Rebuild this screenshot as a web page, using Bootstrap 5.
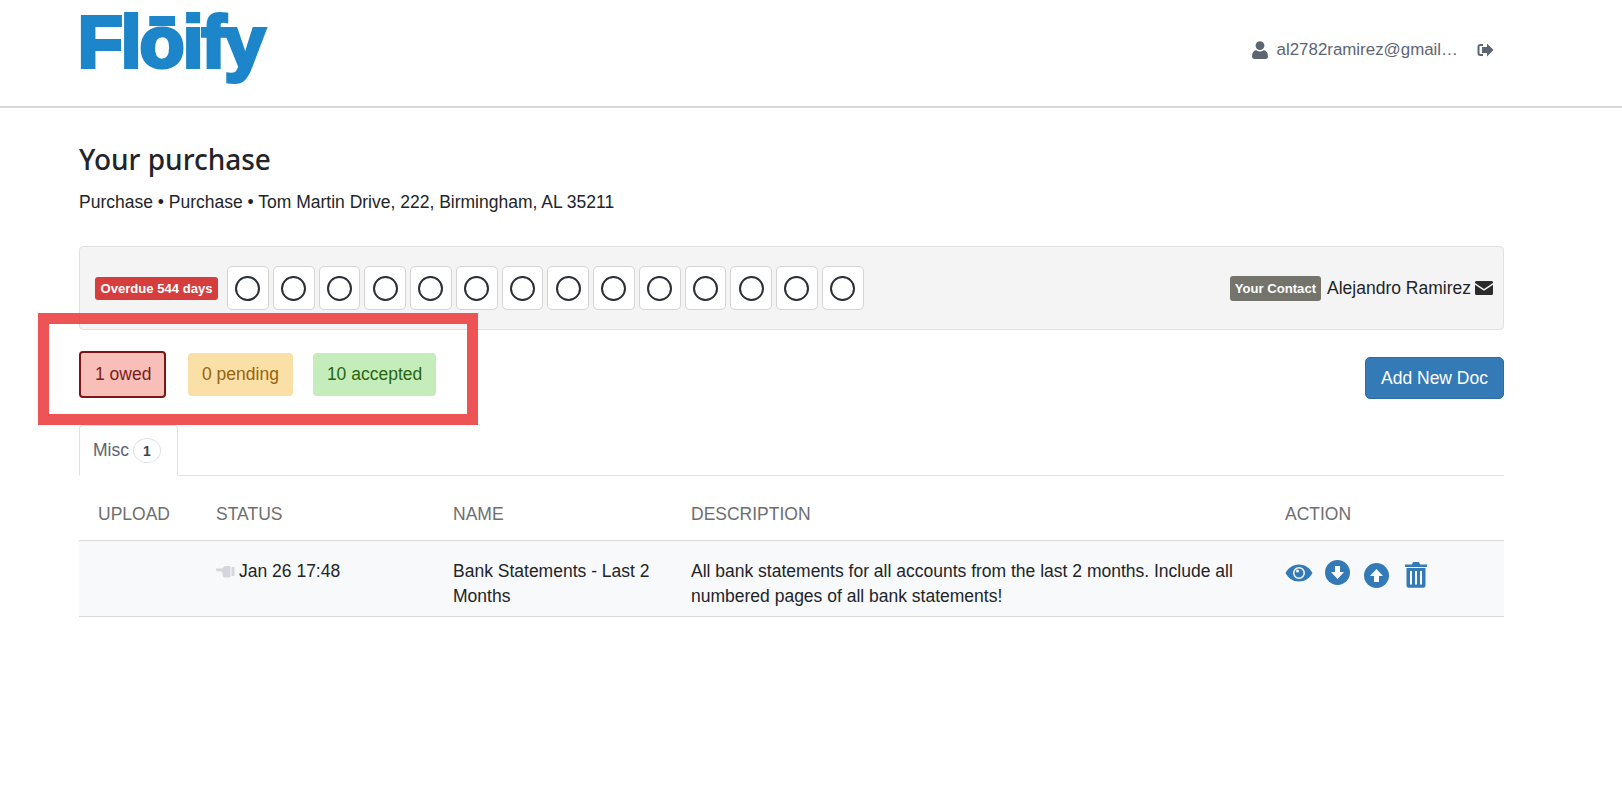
<!DOCTYPE html>
<html lang="en">
<head>
<meta charset="utf-8">
<title>Your purchase</title>
<link href="https://cdn.jsdelivr.net/npm/bootstrap@5.3.0/dist/css/bootstrap.min.css" rel="stylesheet">
<style>
body{font-family:"Liberation Sans",Arial,sans-serif;font-size:17.5px;color:#212529;background:#fff;height:811px;overflow:hidden;}
.wrap{padding:0 118px 0 79px;}
.top-bar{height:108px;border-bottom:2px solid #d9d9d9;}
.logo-text{font-family:"Liberation Sans",Arial,sans-serif;font-weight:700;font-size:73px;line-height:80px;letter-spacing:-1.5px;color:#1d85c9;-webkit-text-stroke:4px #1d85c9;paint-order:stroke fill;margin:2px 0 0 -1px;padding-right:8px;white-space:nowrap;}
.user-box{color:#5d6573;font-size:16.9px;margin-top:-7px;}
.user-mail{white-space:nowrap;margin-left:9px;}
.out-ico{margin:0 10px 0 19px;}
.page-title{font-family:"Noto Sans",sans-serif;font-weight:500;font-size:28px;line-height:34px;margin:34px 0 0;color:#212529;}
.sub-line{margin:14px 0 0;line-height:24px;}
.status-box{margin-top:32px;height:84px;background:#f4f4f4;border:1px solid #e1e1e1;border-radius:4px;padding:0 10px 0 15px;}
.late-tag{background:#d63e3e;color:#fff;font-weight:700;font-size:13.1px;line-height:23px;height:23px;padding:0 5px;border-radius:3px;width:123px;white-space:nowrap;text-align:center;}
.step-list{margin-left:9px;gap:4px;}
.step-box{width:41.75px;height:44px;background:#fff;border:1px solid #d5d5d5;border-radius:5px;}
.step-ring{width:25px;height:25px;border:2.3px solid #2b2f36;border-radius:50%;}
.who-tag{background:#74746c;color:#fff;font-weight:700;font-size:13.1px;line-height:25px;height:25px;padding:0 5px;border-radius:3px;}
.who-name{margin:0 4px 0 6px;}
.filter-row{margin-top:21px;height:47px;}
.chip{height:43px;line-height:43px;padding:0 14px;border-radius:4px;white-space:nowrap;}
.chip-owed{background:#f7bfb8;color:#7b1c1c;border:2px solid #7b1518;height:47px;line-height:43px;padding:0 14px;width:87px;}
.chip-pend{background:#fae0a6;color:#966310;margin-left:22px;}
.chip-acc{background:#c4edbb;color:#29650f;margin-left:20px;}
.add-doc{background:#337ab7;border:1px solid #2e6da4;color:#fff;border-radius:5px;width:139px;height:42px;padding:0;font-size:17.5px;margin-top:6px;}
.tab-strip{margin-top:27px;height:51px;border-bottom:1px solid #dee2e6;}
.misc-tab{width:99px;height:51px;background:#fff;border:1px solid #dee2e6;border-bottom-color:#fff;border-radius:4px 4px 0 0;padding:12px 0 0 13px;color:#5c6470;line-height:24px;}
.count-ring{width:28px;height:25px;border:1px solid #dee2e6;border-radius:50%;font-size:14px;font-weight:700;color:#3d4450;margin-left:4px;}
.doc-table{table-layout:fixed;width:100%;border-collapse:collapse;}
.doc-table th{font-weight:400;color:#6e6e6e;height:64px;padding:12px 19px 0;vertical-align:middle;border-bottom:1px solid #d9d9d9;}
.doc-table td{background:#f8f9fa;padding:18px 19px 7px;height:75px;vertical-align:top;line-height:25px;border-bottom:1px solid #d9d9d9;}
.c1{width:118px;}.c2{width:237px;}.c3{width:238px;}.c4{width:594px;}
.act-icons{gap:12px;margin-top:1px;}
.act-eye{margin-top:3px;}
.act-up{margin:3px 0 0 2px;}
.act-bin{margin-left:4px;margin-top:1px;}
.flag-ico{margin-right:4px;vertical-align:-1px;}
.frame-mark{position:absolute;left:38px;top:313px;width:440px;height:112px;border:11px solid rgba(236,64,66,.9);}
</style>
</head>
<body>
<header class="top-bar wrap d-flex justify-content-between">
  <div class="logo-text">Flōify</div>
  <div class="user-box d-flex align-items-center">
    <svg width="16" height="18" viewBox="0 0 16 18" fill="#5d6573"><circle cx="8" cy="4.6" r="4.4"/><path d="M0 15.5C0 11 2.5 9.2 4.5 9.2c1 .8 2.2 1.2 3.5 1.2s2.500-.4 3.500-1.200c2 0 4.500 1.800 4.500 6.300 0 1.500-1 2.500-2.400 2.500H2.400C1 18 0 17 0 15.500z"/></svg>
    <span class="user-mail">al2782ramirez@gmail…</span>
    <svg class="out-ico" width="17" height="14" viewBox="0 0 17 14" fill="#5d6573"><path d="M6 1H3.500C1.600 1 .5 2.200.5 4v6c0 1.800 1.100 3 3 3H6v-2H3.500c-.6 0-1-.4-1-1V4c0-.6.4-1 1-1H6z"/><path d="M10 .5 16.500 7 10 13.500V10H5V4h5z"/></svg>
  </div>
</header>
<main class="wrap">
  <h1 class="page-title">Your purchase</h1>
  <p class="sub-line">Purchase • Purchase • Tom Martin Drive, 222, Birmingham, AL 35211</p>
  <section class="status-box d-flex align-items-center justify-content-between">
    <div class="d-flex align-items-center">
      <span class="late-tag">Overdue 544 days</span>
      <div class="step-list d-flex">
        <div class="step-box d-flex align-items-center justify-content-center"><span class="step-ring"></span></div>
        <div class="step-box d-flex align-items-center justify-content-center"><span class="step-ring"></span></div>
        <div class="step-box d-flex align-items-center justify-content-center"><span class="step-ring"></span></div>
        <div class="step-box d-flex align-items-center justify-content-center"><span class="step-ring"></span></div>
        <div class="step-box d-flex align-items-center justify-content-center"><span class="step-ring"></span></div>
        <div class="step-box d-flex align-items-center justify-content-center"><span class="step-ring"></span></div>
        <div class="step-box d-flex align-items-center justify-content-center"><span class="step-ring"></span></div>
        <div class="step-box d-flex align-items-center justify-content-center"><span class="step-ring"></span></div>
        <div class="step-box d-flex align-items-center justify-content-center"><span class="step-ring"></span></div>
        <div class="step-box d-flex align-items-center justify-content-center"><span class="step-ring"></span></div>
        <div class="step-box d-flex align-items-center justify-content-center"><span class="step-ring"></span></div>
        <div class="step-box d-flex align-items-center justify-content-center"><span class="step-ring"></span></div>
        <div class="step-box d-flex align-items-center justify-content-center"><span class="step-ring"></span></div>
        <div class="step-box d-flex align-items-center justify-content-center"><span class="step-ring"></span></div>
      </div>
    </div>
    <div class="d-flex align-items-center">
      <span class="who-tag">Your Contact</span>
      <span class="who-name">Alejandro Ramirez</span>
      <svg width="18" height="14" viewBox="0 0 18 14" fill="#2b2b2b"><path d="M1.500 0h15C17.300 0 18 .7 18 1.500v.6L9 8 0 2.100v-.6C0 .7.700 0 1.500 0z"/><path d="M0 3.800 9 9.800l9-6V12.500c0 .8-.7 1.500-1.500 1.500h-15C.7 14 0 13.300 0 12.500z"/></svg>
    </div>
  </section>
  <div class="filter-row d-flex justify-content-between align-items-start">
    <div class="d-flex align-items-center">
      <span class="chip chip-owed">1 owed</span>
      <span class="chip chip-pend">0 pending</span>
      <span class="chip chip-acc">10 accepted</span>
    </div>
    <button class="btn add-doc" type="button">Add New Doc</button>
  </div>
  <div class="tab-strip">
    <div class="misc-tab d-flex align-items-start">Misc<span class="count-ring d-flex align-items-center justify-content-center">1</span></div>
  </div>
  <table class="doc-table">
    <thead>
      <tr><th class="c1">UPLOAD</th><th class="c2">STATUS</th><th class="c3">NAME</th><th class="c4">DESCRIPTION</th><th>ACTION</th></tr>
    </thead>
    <tbody>
      <tr>
        <td></td>
        <td><svg class="flag-ico" width="19" height="14" viewBox="0 0 19 14" fill="#d3d7dc"><path d="M0 4.500h6L9 2h4c1 0 1.500.6 1.500 1.400V12c0 .8-.6 1.400-1.400 1.400H8.500C7.500 13.400 7 12.500 6.800 11.500L6 7.500H2C.8 7.500 0 6.500 0 5.500z"/><rect x="15.500" y="3" width="3" height="9" rx=".8"/></svg>Jan 26 17:48</td>
        <td>Bank Statements - Last 2 Months</td>
        <td>All bank statements for all accounts from the last 2 months. Include all numbered pages of all bank statements!</td>
        <td>
          <div class="act-icons d-flex align-items-start">
            <svg class="act-eye" width="28" height="20" viewBox="0 0 28 20" fill="#337ab7"><path fill-rule="evenodd" d="M14 1.500C8 1.500 3.200 5 .5 10c2.700 5 7.500 8.500 13.500 8.500S24.800 15 27.500 10C24.800 5 20 1.500 14 1.500zM14 4a6 6 0 1 1 0 12 6 6 0 0 1 0-12z"/><path fill-rule="evenodd" d="M14 5.500a4.500 4.500 0 1 0 0 9 4.500 4.500 0 0 0 0-9zM12.500 6.500a1.500 1.500 0 1 1 0 3 1.500 1.500 0 0 1 0-3z"/></svg>
            <svg width="25" height="25" viewBox="0 0 25 25"><circle cx="12.500" cy="12.500" r="12.500" fill="#337ab7"/><path d="M10 6h5v6h4l-6.500 7L6 12h4z" fill="#fff"/></svg>
            <svg class="act-up" width="25" height="25" viewBox="0 0 25 25"><circle cx="12.500" cy="12.500" r="12.500" fill="#337ab7"/><path d="M10 19h5v-6h4L12.500 6 6 13h4z" fill="#fff"/></svg>
            <svg class="act-bin" width="22" height="27" viewBox="0 0 22 27" fill="#337ab7"><path d="M0 3.500h7l1-2.500h6l1 2.500h7v2.500H0z"/><path fill-rule="evenodd" d="M1.500 7h19v17.500c0 1.300-.9 2.200-2 2.200h-15c-1.100 0-2-.9-2-2.200zM5 10v13.500h2V10zM10 10v13.500h2V10zM15 10v13.500h2V10z"/></svg>
          </div>
        </td>
      </tr>
    </tbody>
  </table>
</main>
<div class="frame-mark"></div>
<script src="https://cdn.jsdelivr.net/npm/bootstrap@5.3.0/dist/js/bootstrap.bundle.min.js"></script>
</body>
</html>
